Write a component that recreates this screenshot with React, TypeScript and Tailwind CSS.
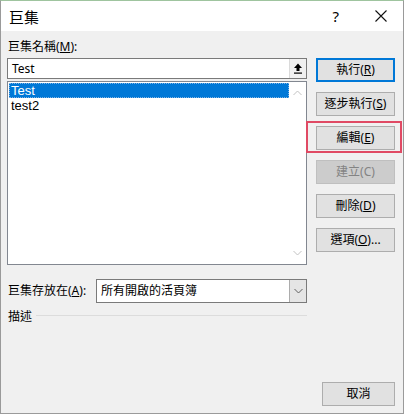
import React from "react";

const ui = { fontFamily: '"Segoe UI", "Noto Sans", "Noto Sans CJK TC", sans-serif' };
const listFont = { fontFamily: '"Liberation Sans", "Noto Sans CJK TC", sans-serif' };

const Btn = ({
  children,
  def,
  disabled,
  className = "",
}: {
  children: React.ReactNode;
  def?: boolean;
  disabled?: boolean;
  className?: string;
}) => (
  <div
    className={
      "h-[24px] flex items-center justify-center text-[12px] " +
      (def
        ? "border-2 border-[#0078d7] bg-[#e1e1e1] text-black "
        : disabled
          ? "border border-[#bfbfbf] bg-[#cccccc] text-[#838383] "
          : "border border-[#adadad] bg-[#e1e1e1] text-black ") +
      className
    }
  >
    {children}
  </div>
);

const Chevron = ({ up }: { up?: boolean }) => (
  <svg width="9" height="6" viewBox="0 0 9 6">
    <path
      d={up ? "M0.5 5 L4.5 1 L8.5 5" : "M0.5 1 L4.5 5 L8.5 1"}
      fill="none"
      stroke="currentColor"
      strokeWidth="1"
    />
  </svg>
);

export default function App() {
  return (
    <div
      className="relative w-[404px] h-[414px] bg-[#f0f0f0] flex flex-col border-x border-b border-[#9a9a9a] border-t border-t-[#9fc49f]"
      style={ui}
    >
      {/* title bar */}
      <div className="h-[30px] bg-white flex items-center shrink-0">
        <span className="ml-[8px] mt-[2px] text-[15px] text-black">巨集</span>
        <span className="ml-auto mr-[36px] text-[15px] text-black">?</span>
        <svg width="12" height="12" viewBox="0 0 12 12" className="mr-[16px]">
          <path d="M0.5 0.5 L11.5 11.5 M11.5 0.5 L0.5 11.5" stroke="#111" strokeWidth="1.1" />
        </svg>
      </div>

      <div className="flex flex-1">
        {/* left column */}
        <div className="ml-[6px] w-[300px] flex flex-col">
          <div className="h-[27px] pt-[5px] flex items-center text-[12px] text-black pl-[1px]">
            巨集名稱(<span className="underline">M</span>):
          </div>
          <div className="h-[21px] border border-[#7a7a7a] bg-white flex items-center">
            <span className="ml-[4px] text-[12px] text-black">Test</span>
            <div className="ml-auto h-full w-[17px] bg-[#f0f0f0] flex items-center justify-center border-l border-[#dadada]">
              <svg width="10" height="11" viewBox="0 0 10 11">
                <path d="M5 0.5 L9 5 L6.5 5 L6.5 8 L3.5 8 L3.5 5 L1 5 Z" fill="#000" />
                <rect x="1" y="9.5" width="8" height="1.2" fill="#000" />
              </svg>
            </div>
          </div>
          <div className="mt-[2px] h-[184px] border border-[#828790] bg-white flex">
            <div className="flex-1 pt-[1px] pl-[1px] flex flex-col" style={listFont}>
              <div className="h-[15px] bg-[#0078d7] text-white text-[13px] leading-[15px] pl-[2px] outline outline-1 outline-dotted outline-[#7fb4e6] -outline-offset-1">
                Test
              </div>
              <div className="h-[15px] text-black text-[13px] leading-[15px] pl-[2px]">test2</div>
            </div>
            <div className="w-[17px] flex flex-col items-center justify-between py-[8px] text-[#c2c2c2]">
              <Chevron up />
              <Chevron />
            </div>
          </div>
          <div className="mt-[14px] h-[24px] flex items-center">
            <span className="ml-[1px] w-[88px] text-[12px] text-black">
              巨集存放在(<span className="underline">A</span>):
            </span>
            <div className="flex-1 h-full border border-[#7a7a7a] bg-white flex items-center">
              <span className="ml-[4px] text-[12px] text-black">所有開啟的活頁簿</span>
              <div className="ml-auto h-full w-[17px] bg-[#e5e5e5] border-l border-[#acacac] flex items-center justify-center text-[#606060]">
                <Chevron />
              </div>
            </div>
          </div>
          <div className="mt-[4px] h-[20px] flex items-center">
            <span className="ml-[1px] text-[12px] text-black">描述</span>
            <div className="flex-1 ml-[4px] mt-[-3px] h-px bg-[#dcdcdc]" />
          </div>
        </div>

        {/* right column */}
        <div className="ml-[9px] w-[79px] flex flex-col pt-[27px] gap-[10px]">
          <Btn def>
            執行(<span className="underline">R</span>)
          </Btn>
          <Btn>
            逐步執行(<span className="underline">S</span>)
          </Btn>
          <div className="relative">
            <Btn>
              編輯(<span className="underline">E</span>)
            </Btn>
            <div className="absolute left-[-10px] right-[-7px] top-[-5px] bottom-[-3px] border-2 border-[#e04a64]" />
          </div>
          <Btn disabled>建立(C)</Btn>
          <Btn>
            刪除(<span className="underline">D</span>)
          </Btn>
          <Btn>
            選項(<span className="underline">O</span>)...
          </Btn>
          <div className="mt-auto mb-[7px] ml-[6px]">
            <Btn>取消</Btn>
          </div>
        </div>
      </div>
    </div>
  );
}
